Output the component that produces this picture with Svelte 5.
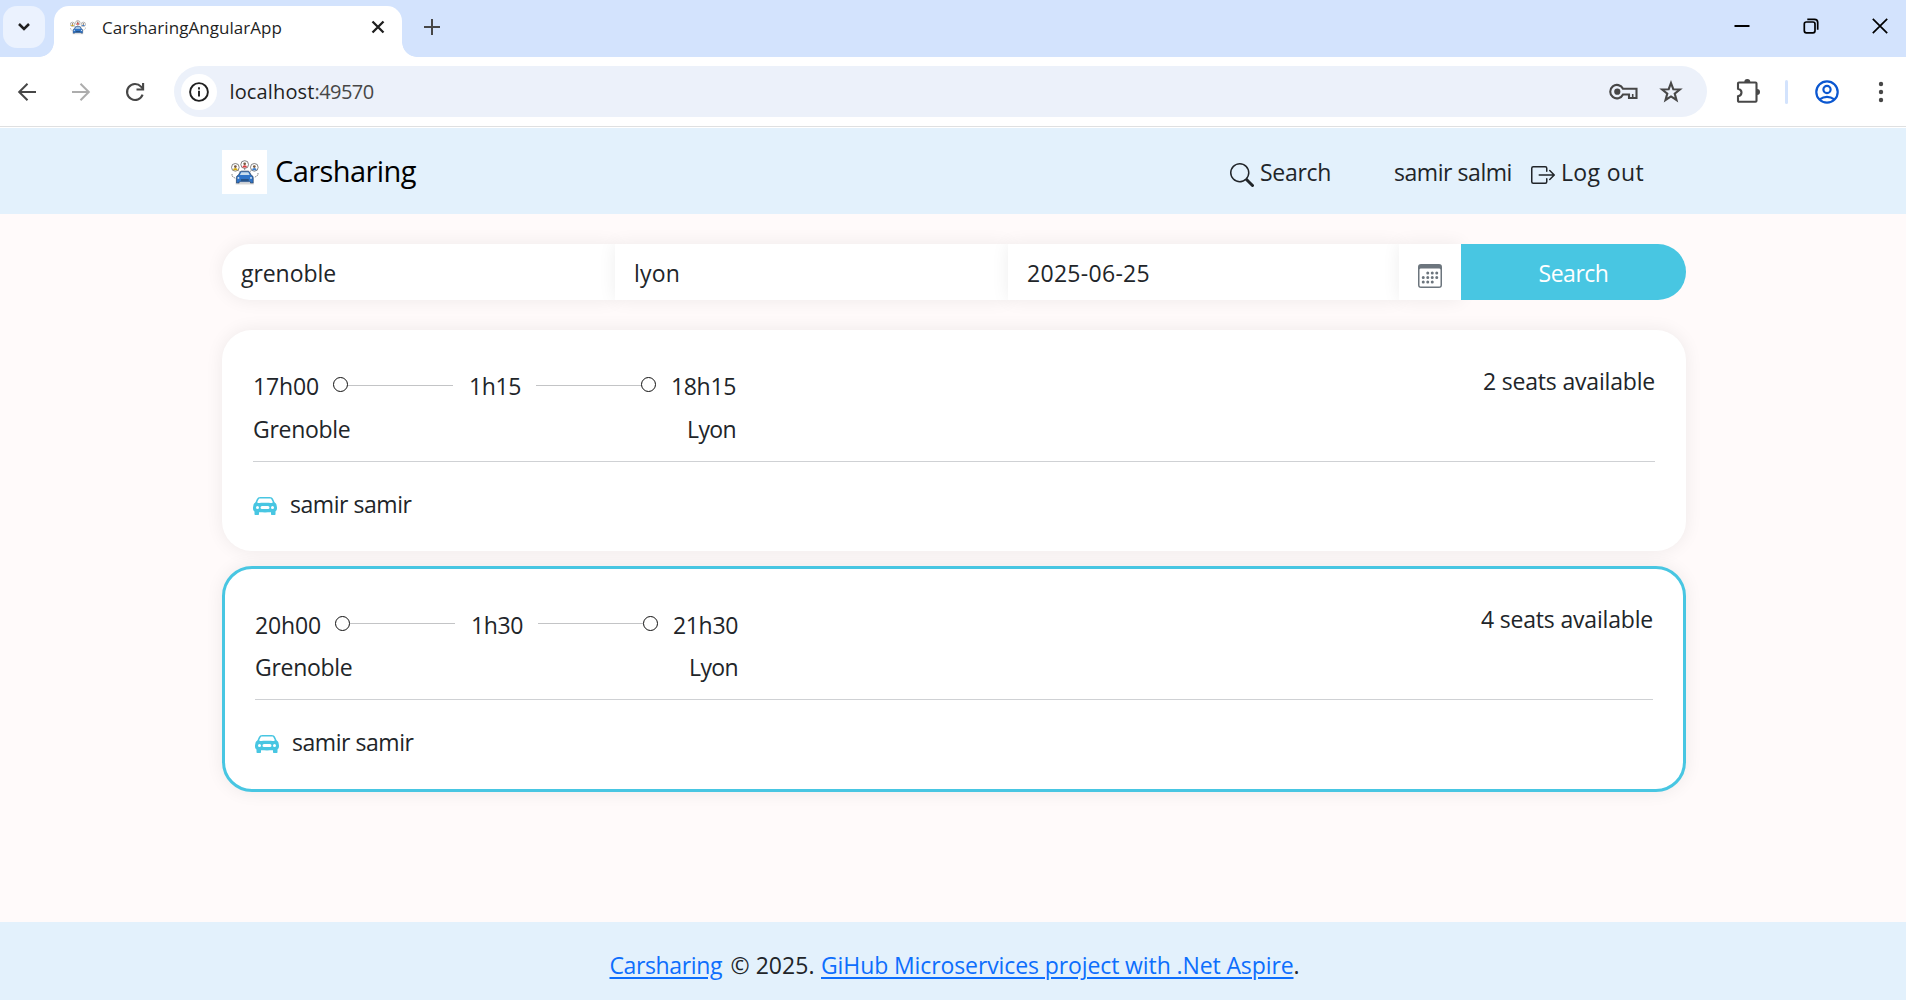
<script>
  const trips = [
    {
      start: '17h00', duration: '1h15', end: '18h15', from: 'Grenoble', to: 'Lyon',
      seats: '2 seats available', driver: 'samir samir', selected: false
    },
    {
      start: '20h00', duration: '1h30', end: '21h30', from: 'Grenoble', to: 'Lyon',
      seats: '4 seats available', driver: 'samir samir', selected: true
    }
  ];

  // Tracks a label so that it takes the given width.
  function fit(node, width) {
    const natural = node.getBoundingClientRect().width;
    node.style.letterSpacing = (width - natural) / node.textContent.length + 'px';
  }
</script>

{#snippet logo(size)}
  <svg width={size} height={size} viewBox="10 8.5 25 27" fill="none">
    <g stroke="#555" stroke-width="0.7">
      <circle cx="13.2" cy="17.5" r="3.7" fill="#fff" />
      <circle cx="22.2" cy="14.8" r="3.7" fill="#fff" />
      <circle cx="31.5" cy="17.5" r="3.7" fill="#fff" />
      <path d="M10 24v2l3 2M35 23v2l-3 2M16 20.5l1.5 1.5M22.2 18.5v2M28.5 20.5L27 22" stroke-dasharray="1.5 .7" />
    </g>
    <path d="M10.9 20.3q.2-2.2 2.3-2.2t2.3 2.2z" fill="#d5ad19" />
    <path d="M19.9 17.6q.2-2.2 2.3-2.2t2.3 2.2z" fill="#dc3f40" />
    <path d="M29.2 20.3q.2-2.2 2.3-2.2t2.3 2.2z" fill="#3c7fce" />
    <circle cx="13.2" cy="16.8" r="1.3" fill="#765b42" />
    <circle cx="22.2" cy="14.1" r="1.3" fill="#765b42" />
    <circle cx="31.5" cy="16.8" r="1.3" fill="#765b42" />
    <path d="M14.2 27.5q0-2 2-2.5l1.6-3q.4-.8 1.2-.8h6.6q.8 0 1.2.8l1.6 3q2 .5 2 2.5v5.2h-2.6v-1.2H16.8v1.2h-2.6z" fill="#2f74c8" stroke="#2a3e5c" stroke-width="0.7" />
    <path d="M17.6 25l1.3-2.7h6.8l1.3 2.7z" fill="#c9ddec" />
    <path d="M18.5 29.7h7.6" stroke="#24405f" stroke-width="1.2" />
    <circle cx="16.2" cy="27.7" r=".9" fill="#e2edf6" /><circle cx="28.3" cy="27.7" r=".9" fill="#e2edf6" />
    <path d="M13.5 33.4h17.6" stroke="#aaa" stroke-width=".7" />
  </svg>
{/snippet}

<div class="window">
  <div class="tabs">
    <div class="dropdown">
      <svg width="14" height="10" viewBox="0 0 14 10"><path d="M2 2l5 5 5-5" fill="none" stroke="#1f1f1f" stroke-width="2.5" /></svg>
    </div>
    <div class="tab">
      <i class="flare left"></i>
      <span class="fav">{@render logo(16)}</span>
      <span class="title"><span use:fit={180}>CarsharingAngularApp</span></span>
      <svg class="x" width="14" height="14" viewBox="0 0 14 14"><path d="M1.5 1.5l11 11m0-11l-11 11" stroke="#1f1f1f" stroke-width="2.3" /></svg>
      <i class="flare right"></i>
    </div>
    <svg class="plus" width="16" height="16" viewBox="0 0 16 16"><path d="M8 0v16M0 8h16" stroke="#474747" stroke-width="2" /></svg>
    <div class="controls">
      <svg width="16" height="16" viewBox="0 0 16 16"><path d="M.5 8h15" stroke="#000" stroke-width="2" /></svg>
      <svg width="16" height="16" viewBox="0 0 16 16" fill="none" stroke="#000" stroke-width="1.7"><rect x="1.3" y="4" width="10.7" height="10.8" rx="2" /><path d="M4.3 1.3h7.2a3.2 3.2 0 0 1 3.2 3.2v7.2" /></svg>
      <svg width="16" height="16" viewBox="0 0 16 16"><path d="M.8.8l14.4 14.4m0-14.4L.8 15.2" stroke="#000" stroke-width="1.7" /></svg>
    </div>
  </div>

  <div class="toolbar">
    <div class="nav">
      <svg width="20" height="20" viewBox="0 0 20 20" fill="none" stroke="#474747" stroke-width="2"><path d="M19 10H2.5M10.5 1.7L2.2 10l8.3 8.3" /></svg>
      <svg width="20" height="20" viewBox="0 0 20 20" fill="none" stroke="#adadad" stroke-width="2"><path d="M1 10h16.5M9.500 1.700L17.800 10l-8.300 8.300" /></svg>
      <svg width="20" height="20" viewBox="0 0 20 20" fill="none" stroke="#474747" stroke-width="2.1"><path d="M17.6 12.6A8 8 0 1 1 16 4.600L18 6.800" /><path d="M18.100 1v6.500h-6.600" /></svg>
    </div>
    <div class="address">
      <span class="info">
        <svg width="22" height="22" viewBox="0 0 22 22"><circle cx="11" cy="11" r="8.900" fill="none" stroke="#1f1f1f" stroke-width="1.9" /><path d="M11 9.700V15.500M11 6.300v2.100" stroke="#1f1f1f" stroke-width="1.900" /></svg>
      </span>
      <span class="url"><span use:fit={85}>localhost</span><span class="port" use:fit={59}>:49570</span></span>
      <svg class="key" width="30" height="18" viewBox="0 0 30 18" fill="none" stroke="#474747" stroke-width="2.1"><path d="M14 5.800A6.700 6.700 0 1 0 14 11.500H20V15h7.500V5.800z" /><circle cx="8.300" cy="8.700" r="3.100" fill="#474747" stroke="none" /><path d="M23.700 11v4" stroke-width="1.600" /></svg>
      <svg class="star" width="24" height="24" viewBox="0 0 24 24" fill="none" stroke="#474747" stroke-width="2.1"><path d="M12 3l2.300 6.200 6.600.3-5.200 4.100 1.800 6.400-5.500-3.600L6.500 20l1.800-6.400-5.200-4.100 6.600-.3z" /></svg>
    </div>
    <svg class="puzzle" width="26" height="26" viewBox="0 0 26 26"><path d="M3 5.500q0-1 1-1h16.500q1 0 1 1v17.200q0 1-1 1H4q-1 0-1-1v-4.400q3.500-.7 3.500-3.800T3 10.700z" fill="none" stroke="#474747" stroke-width="2.100" /><path d="M9.300 4a3 3 0 0 1 6 0zM22 11a3 3 0 0 1 0 6z" fill="#474747" /></svg>
    <i class="sep"></i>
    <svg class="profile" width="24" height="24" viewBox="0 0 24 24" fill="none" stroke="#0b57d0" stroke-width="2.200"><circle cx="12" cy="12" r="10.700" /><circle cx="12" cy="9.500" r="3.600" /><path d="M4.600 19.400q7.400-5 14.800 0" /></svg>
    <svg class="dots" width="6" height="22" viewBox="0 0 6 22" fill="#474747"><circle cx="3" cy="3" r="2.200" /><circle cx="3" cy="11" r="2.200" /><circle cx="3" cy="19" r="2.200" /></svg>
  </div>

  <header>
    <span class="logo">{@render logo(28)}</span>
    <span class="brand"><span use:fit={141}>Carsharing</span></span>
    <nav>
      <a href="#search">
        <svg width="24" height="24" viewBox="0 0 16 16" fill="#212529"><path d="M11.742 10.344a6.500 6.500 0 1 0-1.397 1.398h-.001q.044.060.098.115l3.850 3.850a1 1 0 0 0 1.415-1.414l-3.850-3.850a1 1 0 0 0-.115-.1zM12 6.500a5.500 5.500 0 1 1-11 0 5.500 5.500 0 0 1 11 0" /></svg>
        <span use:fit={71}>Search</span>
      </a>
      <span class="user"><span use:fit={118}>samir salmi</span></span>
      <a href="#logout">
        <svg width="24" height="24" viewBox="0 0 16 16" fill="#212529"><path fill-rule="evenodd" d="M10 12.500a.5.5 0 0 1-.5.5h-8a.5.5 0 0 1-.5-.5v-9a.5.5 0 0 1 .5-.5h8a.5.5 0 0 1 .5.5v2a.5.5 0 0 0 1 0v-2A1.500 1.500 0 0 0 9.500 2h-8A1.500 1.500 0 0 0 0 3.500v9A1.500 1.500 0 0 0 1.500 14h8a1.500 1.500 0 0 0 1.500-1.500v-2a.5.5 0 0 0-1 0z" /><path fill-rule="evenodd" d="M15.854 8.354a.5.5 0 0 0 0-.708l-3-3a.5.5 0 0 0-.708.708L14.293 7.500H5.500a.5.5 0 0 0 0 1h8.793l-2.147 2.146a.5.5 0 0 0 .708.708z" /></svg>
        <span use:fit={83}>Log out</span>
      </a>
    </nav>
  </header>

  <main>
    <div class="search">
      <div class="field first"><span use:fit={95}>grenoble</span></div>
      <div class="field"><span use:fit={46}>lyon</span></div>
      <div class="field date"><span use:fit={123}>2025-06-25</span></div>
      <div class="field cal">
        <svg width="24" height="24" viewBox="0 0 16 16" fill="#6c757d"><path d="M14 0H2a2 2 0 0 0-2 2v12a2 2 0 0 0 2 2h12a2 2 0 0 0 2-2V2a2 2 0 0 0-2-2M1 3.857C1 3.384 1.448 3 2 3h12c.552 0 1 .384 1 .857v10.286c0 .473-.448.857-1 .857H2c-.552 0-1-.384-1-.857z" /><path d="M6.500 7a1 1 0 1 0 0-2 1 1 0 0 0 0 2m3 0a1 1 0 1 0 0-2 1 1 0 0 0 0 2m3 0a1 1 0 1 0 0-2 1 1 0 0 0 0 2m-9 3a1 1 0 1 0 0-2 1 1 0 0 0 0 2m3 0a1 1 0 1 0 0-2 1 1 0 0 0 0 2m3 0a1 1 0 1 0 0-2 1 1 0 0 0 0 2m3 0a1 1 0 1 0 0-2 1 1 0 0 0 0 2m-9 3a1 1 0 1 0 0-2 1 1 0 0 0 0 2m3 0a1 1 0 1 0 0-2 1 1 0 0 0 0 2m3 0a1 1 0 1 0 0-2 1 1 0 0 0 0 2" /></svg>
      </div>
      <button><span use:fit={70}>Search</span></button>
    </div>

    {#each trips as trip}
      <article class:selected={trip.selected}>
        <div class="top">
          <div class="route">
            <div class="times">
              <span use:fit={66}>{trip.start}</span>
              <i class="ring start"></i><i class="line"></i>
              <span class="duration"><span use:fit={52}>{trip.duration}</span></span>
              <i class="line"></i><i class="ring"></i>
              <span class="end"><span use:fit={65}>{trip.end}</span></span>
            </div>
            <div class="places"><span use:fit={97.5}>{trip.from}</span><span use:fit={49}>{trip.to}</span></div>
          </div>
          <div class="seats"><span use:fit={172}>{trip.seats}</span></div>
        </div>
        <div class="driver">
          <svg width="24" height="24" viewBox="0 0 16 16" fill="#48c6e2"><path d="M2.520 3.515A2.500 2.500 0 0 1 4.820 2h6.362c1 0 1.904.596 2.298 1.515l.792 1.848c.075.175.210.319.380.404.5.250.855.715.965 1.262l.335 1.679q.050.242.049.490v.413c0 .814-.390 1.543-1 1.997V13.500a.5.5 0 0 1-.5.5h-2a.5.5 0 0 1-.5-.5v-1.338c-1.292.048-2.745.088-4 .088s-2.708-.040-4-.088V13.500a.5.5 0 0 1-.5.5h-2a.5.5 0 0 1-.5-.5v-1.892c-.610-.454-1-1.183-1-1.997v-.413a2.500 2.500 0 0 1 .049-.490l.335-1.680c.110-.546.465-1.012.964-1.261a.8.8 0 0 0 .381-.404l.792-1.848ZM3 10a1 1 0 1 0 0-2 1 1 0 0 0 0 2m10 0a1 1 0 1 0 0-2 1 1 0 0 0 0 2M6 8a1 1 0 0 0 0 2h4a1 1 0 1 0 0-2zM2.906 5.189a.510.510 0 0 0 .497.731c.910-.073 3.350-.170 4.597-.170s3.688.097 4.597.170a.510.510 0 0 0 .497-.731l-.956-1.913A.5.5 0 0 0 11.691 3H4.309a.5.5 0 0 0-.447.276L2.906 5.190Z" /></svg>
          <span use:fit={121.5}>{trip.driver}</span>
        </div>
      </article>
    {/each}
  </main>

  <footer>
    <a href="#home" use:fit={112.5}>Carsharing</a><span class="year" use:fit={84}>© 2025.</span><a href="#project" use:fit={472.5}>GiHub Microservices project with .Net Aspire</a><span>.</span>
  </footer>
</div>

<style>
  :global(body) { margin: 0; overflow: hidden; }
  .window {
    width: 1906px; height: 1000px; display: flex; flex-direction: column;
    background: #fffafa; color: #212529;
    font: 23px/36px "Open Sans", "Noto Sans", sans-serif;
  }
  .window :global(span) { white-space: nowrap; }
  svg { display: block; flex: none; }
  i { display: block; flex: none; }

  .tabs { height: 57px; flex: none; background: #d3e3fd; display: flex; align-items: flex-start; }
  .dropdown {
    width: 42px; height: 42px; margin: 6px 9px 0 3px; border-radius: 14px; background: #ebf2fe;
    display: flex; align-items: center; justify-content: center;
  }
  .tab {
    position: relative; width: 348px; height: 51px; margin-top: 6px; box-sizing: border-box;
    padding: 0 17px 0 15px; background: #fff; border-radius: 15px 15px 0 0; display: flex; align-items: flex-start;
  }
  .fav { margin: 13px 16px 0 1px; line-height: 0; }
  .title { font-size: 17px; line-height: 24px; margin-top: 10px; color: #1f1f1f; }
  .x { margin: 14px 0 0 auto; }
  .flare { position: absolute; bottom: 0; width: 15px; height: 15px; }
  .left { left: -15px; background: radial-gradient(circle at 0 0, transparent 14.5px, #fff 15.2px); }
  .right { right: -15px; background: radial-gradient(circle at 100% 0, transparent 14.5px, #fff 15.2px); }
  .plus { margin: 19px 0 0 22px; }
  .controls { display: flex; gap: 53px; margin: 18px 18px 0 auto; }

  .toolbar {
    height: 71px; flex: none; box-sizing: border-box; background: #fff; display: flex; align-items: center;
    padding: 0 22px 2px 17px; box-shadow: inset 0 -1px #fff, inset 0 -2px #dfe0e1;
  }
  .nav { display: flex; gap: 34px; }
  .address {
    width: 1533px; height: 51px; margin-left: 29px; box-sizing: border-box; border-radius: 26px; background: #ecf1fa;
    display: flex; align-items: center; padding: 0 24px 0 7px;
  }
  .info { width: 36px; height: 36px; border-radius: 50%; background: #fff; display: flex; align-items: center; justify-content: center; }
  .url { font-size: 20px; line-height: 30px; color: #1f1f1f; margin-left: 12.5px; flex: 1; display: flex; }
  .port { color: #474747; }
  .key { margin-right: 20px; }
  .puzzle { margin: -2px 0 0 28px; }
  .sep { width: 3px; height: 24px; border-radius: 2px; background: #d3e3fd; margin-left: 24px; }
  .profile { margin-left: 27px; }
  .dots { margin-left: 39px; }

  header { height: 86px; flex: none; box-sizing: border-box; background: #e3f1fc; padding: 0 262px 0 222px; display: flex; }
  .logo { width: 45px; height: 44px; margin-top: 22px; background: #fff; display: flex; align-items: center; justify-content: center; }
  .brand { margin: 20px 0 0 8px; font-size: 29px; line-height: 45px; color: #000; }
  nav { display: flex; margin: 26px 0 0 auto; }
  nav a { display: flex; color: inherit; text-decoration: none; }
  nav svg { margin: 9px 6px 0 0; }
  .user { margin: 0 19px 0 63px; }

  main { flex: 1; width: 1464px; margin: 0 auto 0 222px; padding-top: 30px; }
  .search { display: flex; height: 56px; margin-bottom: 30px; }
  .field {
    width: 393px; box-sizing: border-box; padding: 11px 0 0 19px; background: #fff;
    box-shadow: 0 0 18px rgba(0, 0, 0, 0.07);
  }
  .first { border-radius: 28px 0 0 28px; }
  .date { width: 391px; }
  .cal { width: 62px; padding: 20px 0 0 19px; }
  button {
    flex: 1; border: 0; border-radius: 0 28px 28px 0; background: #48c6e2; color: #fff;
    font: inherit; padding: 2px 0 0;
  }

  article {
    box-sizing: border-box; height: 221px; margin-bottom: 15px; padding: 31px; background: #fff; border-radius: 30px;
    box-shadow: 0 0 18px rgba(0, 0, 0, 0.07);
  }
  article.selected { height: 226px; border: 3px solid #48c6e2; padding: 30px; }
  .top { display: flex; justify-content: space-between; height: 100px; border-bottom: 1px solid #cfd1d4; }
  .route { width: 483px; }
  .times { display: flex; align-items: flex-start; height: 50px; padding-top: 7px; box-sizing: border-box; }
  .selected .times { padding-top: 8px; }
  .ring { width: 15px; height: 15px; box-sizing: border-box; border: 1.5px solid #111; border-radius: 50%; margin-top: 9px; }
  .ring.start { margin-left: 14px; }
  .line { width: 105px; height: 1px; background: #c3c4c6; margin-top: 17px; }
  .selected .line { margin-top: 16px; }
  .duration { width: 71px; padding-left: 16px; }
  .end { margin-left: 15px; }
  .places { display: flex; justify-content: space-between; }
  .seats { margin-top: 2px; }
  .driver { display: flex; padding-top: 24px; }
  .driver svg { margin: 8px 13px 0 0; }

  footer { height: 78px; flex: none; box-sizing: border-box; background: #e3f1fc; padding: 25px 0 0 609.5px; display: flex; }
  footer a { color: #0d6efd; text-decoration: underline; text-decoration-thickness: 2px; text-underline-offset: 3px; white-space: nowrap; }
  .year { margin: 0 6.5px 0 8.5px; }
</style>
